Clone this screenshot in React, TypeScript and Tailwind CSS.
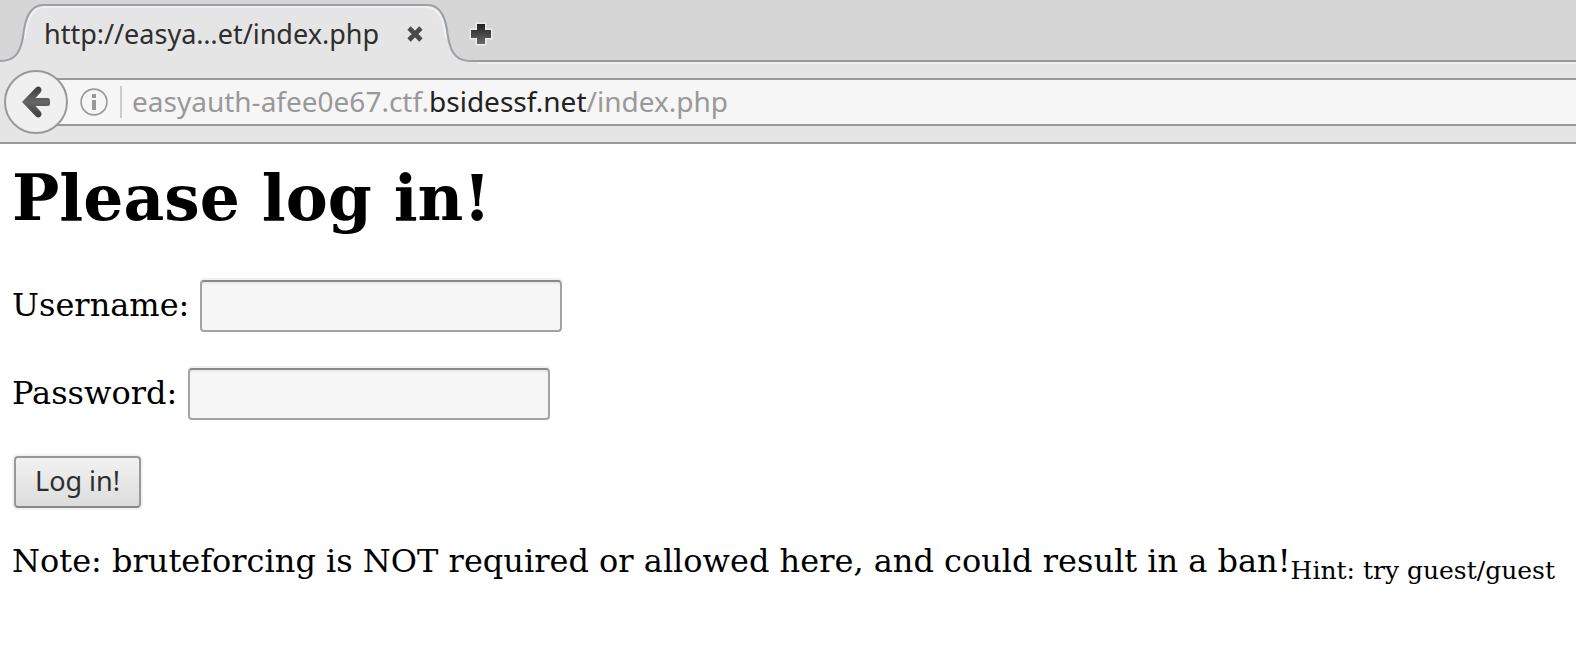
import React from "react";

function BackIcon() {
  return (
    <svg viewBox="0 0 32 36" className="h-9 w-8" aria-hidden="true">
      <defs>
        <linearGradient id="back-fill" x1="0" y1="0" x2="0" y2="1">
          <stop offset="0" stopColor="#3c3c3c" />
          <stop offset="0.5" stopColor="#666666" />
          <stop offset="1" stopColor="#3c3c3c" />
        </linearGradient>
      </defs>
      <path
        d="M2 18 16 3.500Q18.500 1.500 20.500 3.500Q22.500 6 20.500 8.500L15.500 14H27.500Q30 14 30 16.500V19.500Q30 22 27.500 22H15.500L20.500 27.500Q22.500 30 20.500 32.500Q18.500 34.500 16 32.500Z"
        fill="url(#back-fill)"
      />
    </svg>
  );
}

function InfoIcon() {
  return (
    <svg viewBox="0 0 28 28" className="h-7 w-7 shrink-0" aria-hidden="true">
      <circle cx="14" cy="14" r="12.900" fill="none" stroke="#989898" strokeWidth="1.600" />
      <path d="M12 6h4v4h-4zM12 12h4v10h-4z" fill="#989898" />
    </svg>
  );
}

function CloseIcon() {
  return (
    <svg viewBox="0 0 16 16" className="h-4 w-4" aria-hidden="true">
      <path d="M2 2 14 14M14 2 2 14" stroke="#4a4a4a" strokeWidth="4.600" />
    </svg>
  );
}

function PlusIcon() {
  return (
    <svg viewBox="0 0 24 24" className="h-6 w-6" aria-hidden="true">
      <defs>
        <linearGradient id="plus-fill" x1="0" y1="0" x2="0" y2="1">
          <stop offset="0" stopColor="#202020" />
          <stop offset="1" stopColor="#6a6a6a" />
        </linearGradient>
      </defs>
      <path
        d="M8 2h8v6h6v8h-6v6H8v-6H2V8h6z"
        fill="url(#plus-fill)"
        stroke="#ececec"
        strokeWidth="3"
        paintOrder="stroke"
      />
    </svg>
  );
}

function TabEdge({ side }: { side: "left" | "right" }) {
  return (
    <svg
      viewBox="0 0 50 60"
      className={side === "left" ? "h-[60px] w-[50px] shrink-0" : "h-[60px] w-[50px] shrink-0 -scale-x-100"}
      aria-hidden="true"
    >
      <path d="M0 60V57H6C20 57 26 50 29 33C31 14 36 1 50 1V60Z" fill="#e5e5e5" />
      <path d="M31 34C33 15 38 3 50 3" fill="none" stroke="#f1f1f1" strokeWidth="2" />
      <path d="M0 57H6C20 57 26 50 29 33C31 14 36 1 50 1" fill="none" stroke="#9aa0a6" strokeWidth="2" />
    </svg>
  );
}

function TabBar() {
  return (
    <div className="flex h-16 items-end bg-[#d6d6d6] shadow-[inset_0_-2px_0_#f0f0f0,inset_0_-4px_0_#999999]">
      <div className="-ml-[6px] flex h-[60px] items-start">
        <TabEdge side="left" />
        <div className="flex h-[60px] items-center gap-7 border-t-2 border-[#9aa0a6] bg-[#e5e5e5] pr-1 pb-[2px] shadow-[inset_0_2px_0_#f1f1f1]">
          <a href="#page" className="text-[27px] leading-9 text-[#2e2e2e]">
            http://easya…et/index.php
          </a>
          <button type="button" aria-label="Close tab">
            <CloseIcon />
          </button>
        </div>
        <TabEdge side="right" />
      </div>
      <button type="button" aria-label="New tab" className="relative -ml-2 mb-[18px]">
        <PlusIcon />
      </button>
    </div>
  );
}

function AddressBar() {
  return (
    <div className="flex items-center border-b-2 border-[#999999] bg-[#e5e5e5] pt-[6px] pb-2 pl-1">
      <button
        type="button"
        aria-label="Back"
        className="z-10 flex h-16 w-16 shrink-0 items-center justify-center rounded-full border-2 border-[#999999] bg-[#f0f0f0]"
      >
        <BackIcon />
      </button>
      <div className="-ml-4 flex h-12 grow items-center border-y-2 border-[#999999] bg-[#f6f6f6] pl-7">
        <InfoIcon />
        <span className="ml-3 h-8 w-[2px] bg-[#cccccc]" />
        <a href="#page" className="ml-[10px] pb-[2px] text-[28px] leading-9 text-[#999999]">
          easyauth-afee0e67.ctf.<span className="text-[#222222]">bsidessf.net</span>/index.php
        </a>
      </div>
    </div>
  );
}

function Field({ id, label, type }: { id: string; label: string; type: string }) {
  return (
    <div className="flex items-center gap-[11px]">
      <label htmlFor={id} className="pb-[2px]">
        {label}
      </label>
      <input
        id={id}
        name={id}
        type={type}
        className="h-[52px] w-[362px] rounded-[4px] border-2 border-[#a3a3a3] border-t-[#888888] bg-[#f6f6f6] px-2 shadow-[inset_0_2px_0_#ebebeb,0_-2px_0_#f0f0f0] outline-none"
      />
    </div>
  );
}

export default function App() {
  return (
    <div className="min-h-screen bg-white text-black">
      <header className="font-['Noto_Sans',sans-serif]">
        <TabBar />
        <AddressBar />
      </header>
      <main id="page" className="pt-4 pl-3 font-['DejaVu_Serif',serif] text-[32px] leading-[38px]">
        <h1 className="text-[63px] leading-[76px] font-bold">Please log in!</h1>
        <form className="mt-11 flex flex-col items-start gap-9" onSubmit={(e) => e.preventDefault()}>
          <Field id="username" label="Username:" type="text" />
          <Field id="password" label="Password:" type="password" />
          <button
            type="submit"
            className="ml-[2px] h-[52px] rounded-[4px] border-2 border-[#999999] border-b-[#888888] bg-linear-to-b from-[#f2f2f2] to-[#dcdcdc] px-[19px] pb-[2px] font-['Noto_Sans',sans-serif] text-[27px] text-[#2e2e2e] shadow-[0_0_0_2px_#f2f2f2]"
          >
            Log in!
          </button>
        </form>
        <p className="mt-[34px]">
          Note: bruteforcing is NOT required or allowed here, and could result in a ban!
          <sub className="bottom-auto align-sub text-[25px] leading-none">Hint: try guest/guest</sub>
        </p>
      </main>
    </div>
  );
}
